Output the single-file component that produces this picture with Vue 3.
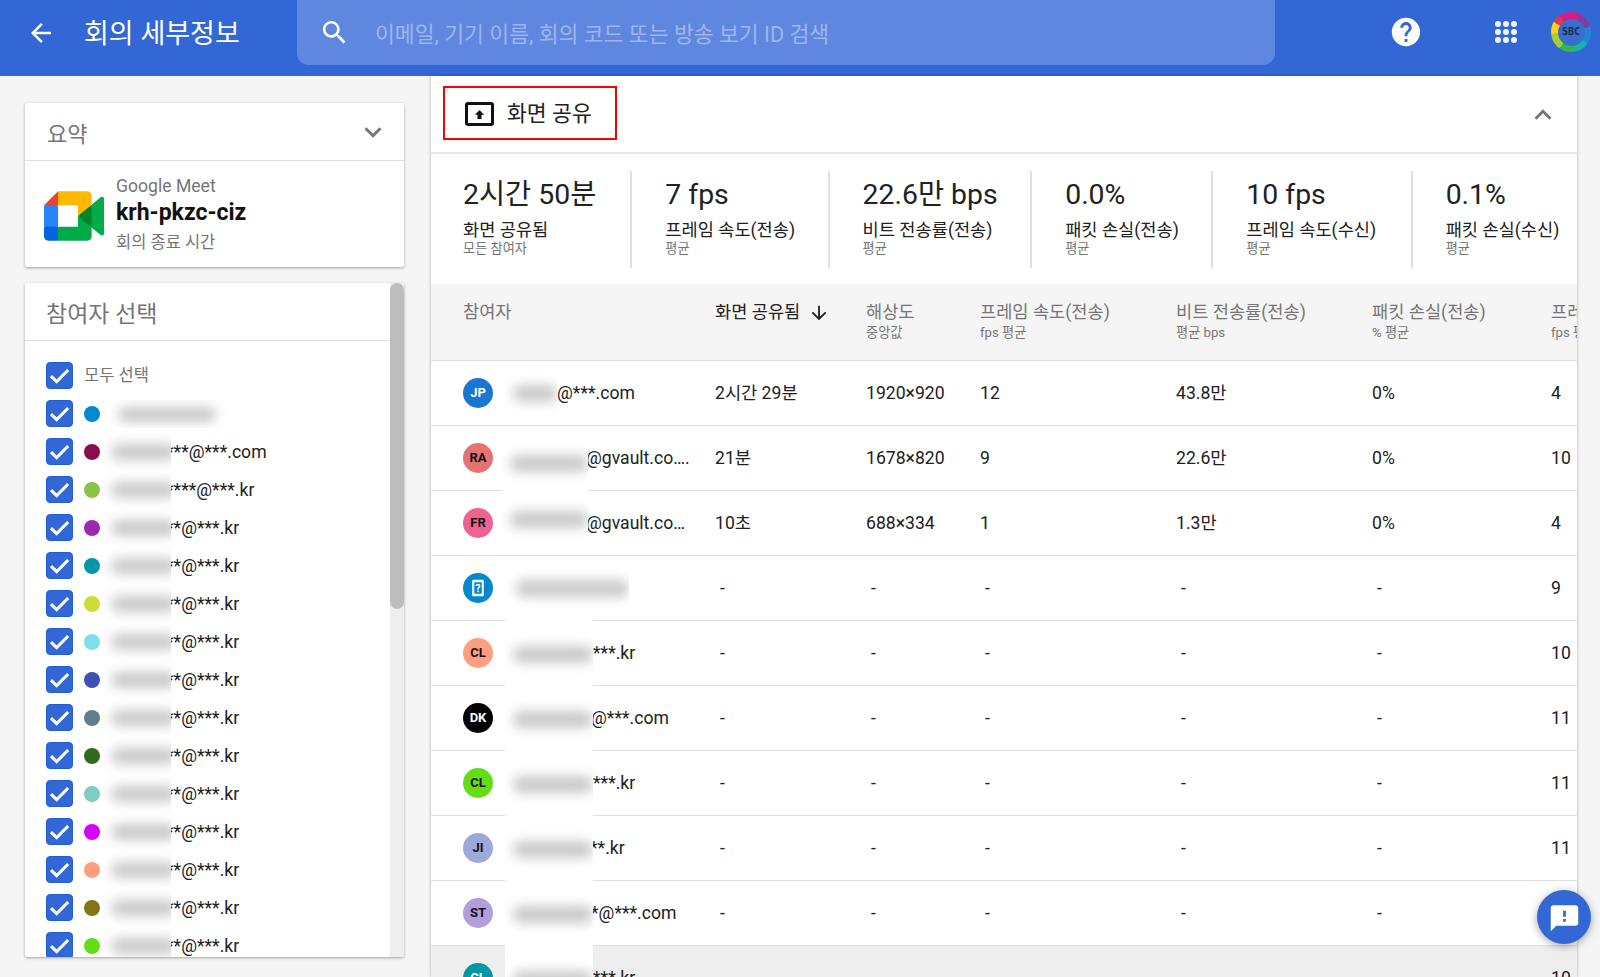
<template>
  <div class="page">
    <header class="topbar">
      <svg class="back-icon" viewBox="0 0 24 24"><path d="M20 11H7.830l5.590-5.590L12 4l-8 8 8 8 1.410-1.410L7.830 13H20v-2z" /></svg>
      <h1 class="page-title">회의 세부정보</h1>
      <div class="search">
        <svg class="search-icon" viewBox="0 0 24 24"><path d="M15.500 14h-.79l-.28-.27C15.410 12.590 16 11.110 16 9.500 16 5.910 13.090 3 9.500 3S3 5.910 3 9.500 5.910 16 9.500 16c1.610 0 3.090-.59 4.230-1.570l.27.28v.79l5 4.990L20.490 19l-4.990-5zm-6 0C7.010 14 5 11.990 5 9.500S7.010 5 9.500 5 14 7.010 14 9.500 11.990 14 9.500 14z" /></svg>
        <span class="search-text">이메일, 기기 이름, 회의 코드 또는 방송 보기 ID 검색</span>
      </div>
      <svg class="help-icon" viewBox="0 0 24 24"><path d="M12 2C6.480 2 2 6.480 2 12s4.480 10 10 10 10-4.480 10-10S17.520 2 12 2zm1 17h-2v-2h2v2zm2.070-7.750l-.9.920C13.450 12.900 13 13.500 13 15h-2v-.5c0-1.100.45-2.100 1.170-2.830l1.240-1.260c.37-.36.59-.86.59-1.410 0-1.100-.9-2-2-2s-2 .9-2 2H8c0-2.210 1.790-4 4-4s4 1.790 4 4c0 .88-.36 1.680-.93 2.250z" /></svg>
      <div class="apps">
        <i v-for="n in 9" :key="n"></i>
      </div>
      <div class="account"><span class="account-inner">SBC</span></div>
    </header>

    <div class="content">
      <aside class="side">
        <section class="card summary">
          <div class="card-head">
            <span class="summary-title">요약</span>
            <svg class="chevron" viewBox="0 0 24 24"><path d="M7.410 8.590 12 13.170l4.590-4.580L18 10l-6 6-6-6z" /></svg>
          </div>
          <div class="meet">
            <svg class="meet-logo" viewBox="0 0 87.500 72">
              <path fill="#00832d" d="M49.500 36l8.530 9.750 11.470 7.330 2-17.020-2-16.640-11.690 6.440z" />
              <path fill="#0066da" d="M0 51.500V66c0 3.315 2.685 6 6 6h14.500l3-10.960-3-9.540-9.950-3z" />
              <path fill="#e94235" d="M20.500 0L0 20.500l10.550 3 9.950-3 2.950-9.410z" />
              <path fill="#2684fc" d="M20.500 20.500H0v31h20.500z" />
              <path fill="#00ac47" d="M82.600 8.680L69.500 19.420v33.660l13.160 10.790c1.970 1.540 4.850.135 4.850-2.370V11c0-2.535-2.945-3.925-4.910-2.320zM49.500 36v15.500h-29V72h43c3.315 0 6-2.685 6-6V53.080z" />
              <path fill="#ffba00" d="M63.500 0h-43v20.500h29V36l20-16.570V6c0-3.315-2.685-6-6-6z" />
            </svg>
            <div class="meet-text">
              <div class="meet-app">Google Meet</div>
              <div class="meet-code">krh-pkzc-ciz</div>
              <div class="meet-state">회의 종료 시간</div>
            </div>
          </div>
        </section>

        <section class="card people">
          <div class="people-main">
            <div class="people-head">참여자 선택</div>
            <div class="people-list">
              <div class="pick-row">
                <span class="check"><svg viewBox="0 0 24 24"><path d="M3.800 12.500l5.500 5.300L20.300 6.700" /></svg></span>
                <span class="pick-all">모두 선택</span>
              </div>
              <div v-for="(p, i) in picks" :key="i" class="pick-row">
                <span class="check"><svg viewBox="0 0 24 24"><path d="M3.800 12.500l5.500 5.300L20.300 6.700" /></svg></span>
                <span class="dot" :style="{ background: p.color }"></span>
                <span v-if="i === 0" class="pick-blur-wide"><b></b></span>
                <template v-else>
                  <span class="pick-blur"><b></b></span>
                  <span class="pick-mail">{{ p.mail }}</span>
                </template>
              </div>
            </div>
          </div>
          <div class="scroll-track"><div class="scroll-thumb"></div></div>
        </section>
      </aside>

      <main class="panel">
        <div class="section-head">
          <div class="section-title">
            <span class="share-icon">
              <svg viewBox="0 0 12 12"><path d="M6 1 11 6.300H8.200V11H3.800V6.300H1z" /></svg>
            </span>
            <span>화면 공유</span>
          </div>
          <svg class="chevron up" viewBox="0 0 24 24"><path d="M7.410 15.410 12 10.830l4.590 4.580L18 14l-6-6-6 6z" /></svg>
        </div>

        <div class="metrics">
          <div v-for="m in metrics" :key="m.label" class="metric">
            <div class="metric-value">{{ m.value }}</div>
            <div class="metric-label">{{ m.label }}</div>
            <div class="metric-sub">{{ m.sub }}</div>
          </div>
        </div>

        <div class="table-head grid">
          <div v-for="c in columns" :key="c.title" class="th" :class="{ active: c.active }">
            <div class="th-title">
              {{ c.title }}
              <svg v-if="c.active" class="sort-icon" viewBox="0 0 24 24"><path d="M20 12l-1.410-1.410L13 16.170V4h-2v12.170l-5.580-5.590L4 12l8 8 8-8z" /></svg>
            </div>
            <div class="th-sub">{{ c.sub }}</div>
          </div>
        </div>

        <div v-for="(r, i) in rows" :key="i" class="row grid" :class="{ hover: r.hover }">
          <div class="name-cell">
            <span class="avatar" :style="{ background: r.color, color: r.ink }">
              <svg v-if="r.device" class="device-icon" viewBox="0 0 24 24"><path d="M6.500 2h11c.8 0 1.500.7 1.500 1.500v17c0 .8-.7 1.500-1.500 1.500h-11c-.8 0-1.500-.7-1.500-1.500v-17C5 2.700 5.700 2 6.500 2zM7.500 5v14h9V5z" /><path d="M11 15h2v2h-2zM12 7c1.700 0 3 1.100 3 2.700 0 1.900-2 2-2 4h-2c0-2.600 2-2.600 2-4 0-.5-.4-.9-1-.9s-1 .4-1 .9H9C9 8.100 10.300 7 12 7z" /></svg>
              <template v-else>{{ r.initials }}</template>
            </span>
            <span class="blur-patch" :class="r.patch" :style="{ width: r.blurW + 'px', marginLeft: r.blurX + 'px' }"><b></b></span>
            <span class="mail" :style="{ marginLeft: r.tuck + 'px' }">{{ r.mail }}</span>
          </div>
          <div v-for="(v, j) in r.values" :key="j" class="cell" :class="{ dash: v === '-' }">{{ v }}</div>
        </div>
      </main>
    </div>

    <button class="feedback">
      <svg viewBox="0 0 24 24"><path d="M20 3H4c-1.100 0-2 .9-2 2v17l4-4h14c1.100 0 2-.9 2-2V5c0-1.100-.9-2-2-2zm-7 8.500h-2V7h2v4.500zm0 3.500h-2v-2h2v2z" /></svg>
    </button>
  </div>
</template>

<script setup>
const colors = ['#0288d1', '#880e4f', '#8bc34a', '#9c27b0', '#0097a7', '#cddc39', '#80deea', '#3f51b5', '#607d8b', '#33691e', '#80cbc4', '#d500f9', '#ff9e80', '#827717', '#64dd17']

const picks = colors.map((color, i) => {
  let mail = '**@***.kr'
  if (i === 1) mail = '***@***.com'
  if (i === 2) mail = '****@***.kr'
  return { color, mail }
})

const metrics = [
  { value: '2시간 50분', label: '화면 공유됨', sub: '모든 참여자' },
  { value: '7 fps', label: '프레임 속도(전송)', sub: '평균' },
  { value: '22.6만 bps', label: '비트 전송률(전송)', sub: '평균' },
  { value: '0.0%', label: '패킷 손실(전송)', sub: '평균' },
  { value: '10 fps', label: '프레임 속도(수신)', sub: '평균' },
  { value: '0.1%', label: '패킷 손실(수신)', sub: '평균' }
]

const columns = [
  { title: '참여자', sub: '' },
  { title: '화면 공유됨', sub: '', active: true },
  { title: '해상도', sub: '중앙값' },
  { title: '프레임 속도(전송)', sub: 'fps 평균' },
  { title: '비트 전송률(전송)', sub: '평균 bps' },
  { title: '패킷 손실(전송)', sub: '% 평균' },
  { title: '프레임 속도(수신)', sub: 'fps 평균' }
]

const empty = ['-', '-', '-', '-', '-']

const rows = [
  { initials: 'JP', color: '#1976d2', ink: '#fff', blurX: 12, blurW: 52, patch: 'short', tuck: 0, mail: '@***.com', values: ['2시간 29분', '1920×920', '12', '43.8만', '0%', '4'] },
  { initials: 'RA', color: '#e57373', ink: '#111', blurX: 9, blurW: 86, patch: 'open-bottom', tuck: -2, mail: '@gvault.co….', values: ['21분', '1678×820', '9', '22.6만', '0%', '10'] },
  { initials: 'FR', color: '#f06292', ink: '#111', blurX: 9, blurW: 86, patch: 'open-top', tuck: -2, mail: '@gvault.co…', values: ['10초', '688×334', '1', '1.3만', '0%', '4'] },
  { device: true, color: '#0288d1', ink: '#fff', blurX: 15, blurW: 121, patch: 'short', tuck: 0, mail: '', values: [...empty, '9'] },
  { initials: 'CL', color: '#ff9e80', ink: '#111', blurX: 12, blurW: 88, patch: 'full', tuck: 0, mail: '***.kr', values: [...empty, '10'] },
  { initials: 'DK', color: '#000', ink: '#fff', blurX: 12, blurW: 88, patch: 'full', tuck: -2, mail: '@***.com', values: [...empty, '11'] },
  { initials: 'CL', color: '#64dd17', ink: '#111', blurX: 12, blurW: 88, patch: 'full', tuck: 0, mail: '***.kr', values: [...empty, '11'] },
  { initials: 'JI', color: '#9fa8da', ink: '#111', blurX: 12, blurW: 88, patch: 'full', tuck: -3, mail: '**.kr', values: [...empty, '11'] },
  { initials: 'ST', color: '#b39ddb', ink: '#111', blurX: 12, blurW: 88, patch: 'full', tuck: -2, mail: '*@***.com', values: [...empty, '11'] },
  { initials: 'CL', color: '#0097a7', ink: '#fff', blurX: 12, blurW: 88, patch: 'full', tuck: 0, mail: '***.kr', values: [...empty, '10'], hover: true }
]
</script>

<style scoped>
.page {
  position: relative;
  width: 1600px;
  height: 977px;
  overflow: hidden;
  background: #f5f5f5;
  color: #212121;
  font-family: Roboto, "Noto Sans CJK KR", sans-serif;
  font-size: 17.600px;
}

.topbar {
  height: 76px;
  background: #3367d6;
  display: flex;
  align-items: flex-start;
  color: #fff;
}

.back-icon {
  width: 30px;
  height: 30px;
  fill: #fff;
  margin: 18px 0 0 26px;
}

.page-title {
  width: 213px;
  margin: 14px 0 0 28px;
  font-size: 27px;
  font-weight: 400;
  line-height: 40px;
}

.search {
  width: 978px;
  height: 65px;
  background: #6087df;
  border-radius: 0 0 12px 12px;
  display: flex;
  align-items: center;
}

.search-icon {
  width: 31px;
  height: 31px;
  fill: #fff;
  margin-left: 22px;
}

.search-text {
  margin-left: 25px;
  font-size: 21.600px;
  color: #9db6ed;
}

.help-icon {
  width: 34px;
  height: 34px;
  fill: #fff;
  margin: 15px 0 0 114px;
}

.apps {
  width: 24px;
  margin: 21px 0 0 72px;
  display: grid;
  grid-template-columns: repeat(3, 6px);
  grid-auto-rows: 6px;
  gap: 2.100px;
}

.apps i {
  background: #f0f4fc;
  border-radius: 50%;
}

.account {
  width: 40px;
  height: 40px;
  margin: 12px 0 0 32px;
  border-radius: 50%;
  background: conic-gradient(#d81b8a 0deg 30deg, #7b3fa0 30deg 75deg, #1e88d8 75deg 125deg, #12b5b0 125deg 165deg, #2fb84e 165deg 215deg, #a5cf30 215deg 265deg, #fdd017 265deg 300deg, #e8344e 300deg 325deg, #d81b8a 325deg 360deg);
  display: flex;
  align-items: center;
  justify-content: center;
}

.account-inner {
  width: 27px;
  height: 27px;
  border-radius: 50%;
  background: #3a6dcc;
  color: #1a2a55;
  font-family: "DejaVu Sans Mono", monospace;
  font-size: 10px;
  font-weight: 700;
  text-align: center;
  line-height: 26px;
}

.content {
  display: flex;
  height: 901px;
}

.side {
  width: 431px;
  flex: none;
  padding: 27px 27px 20px 25px;
  box-sizing: border-box;
  display: flex;
  flex-direction: column;
  gap: 16px;
}

.card {
  background: #fff;
  border-radius: 2px;
  box-shadow: 0 1px 3px rgba(0, 0, 0, 0.35);
}

.summary {
  height: 164px;
}

.card-head {
  height: 57px;
  padding: 0 14px 0 22px;
  display: flex;
  align-items: center;
  justify-content: space-between;
  border-bottom: 1px solid #e0e0e0;
}

.summary-title {
  font-size: 22px;
  color: #757575;
}

.chevron {
  width: 34px;
  height: 34px;
  fill: #757575;
}

.meet {
  display: flex;
  align-items: center;
  padding: 13px 0 0 19px;
}

.meet-logo {
  width: 60px;
  height: 50px;
}

.meet-text {
  margin-left: 12px;
}

.meet-app {
  font-size: 17.600px;
  line-height: 24px;
  color: #757575;
}

.meet-code {
  font-size: 23px;
  font-weight: 700;
  line-height: 30px;
  color: #111;
}

.meet-state {
  font-size: 16.500px;
  line-height: 29px;
  color: #757575;
}

.people {
  flex: 1;
  min-height: 0;
  display: flex;
  overflow: hidden;
}

.people-main {
  flex: 1;
  min-width: 0;
  overflow: hidden;
}

.people-head {
  height: 58px;
  box-sizing: border-box;
  padding: 7px 0 0 21px;
  font-size: 23px;
  line-height: 50px;
  color: #757575;
  border-bottom: 1px solid #e0e0e0;
}

.people-list {
  padding: 21px 0 0 21px;
  display: flex;
  flex-direction: column;
  gap: 11px;
}

.pick-row {
  height: 27px;
  display: flex;
  align-items: center;
  flex: none;
}

.check {
  width: 27px;
  height: 27px;
  flex: none;
  box-sizing: border-box;
  background: #3367d6;
  border: 1px solid #1e5fd8;
  border-radius: 4px;
}

.check svg {
  display: block;
  width: 25px;
  height: 25px;
  fill: none;
  stroke: #fff;
  stroke-width: 3;
}

.pick-all {
  margin-left: 11px;
  font-size: 16.500px;
  line-height: 24px;
  color: #757575;
}

.dot {
  width: 16px;
  height: 16px;
  flex: none;
  margin-left: 11px;
  border-radius: 50%;
}

.pick-blur,
.pick-blur-wide {
  position: relative;
  flex: none;
  background: #fff;
  overflow: hidden;
}

.pick-blur {
  width: 68px;
  height: 38px;
  margin-left: 3px;
  z-index: 1;
}

.pick-blur-wide {
  width: 130px;
  height: 28px;
  margin-left: 6px;
}

.pick-blur b,
.pick-blur-wide b,
.blur-patch b {
  position: absolute;
  background: #c9c9c9;
  border-radius: 8px;
  filter: blur(6px);
}

.pick-blur b {
  left: 8px;
  right: -6px;
  top: 11px;
  height: 16px;
}

.pick-blur-wide b {
  left: 12px;
  right: 20px;
  top: 7px;
  height: 15px;
}

.pick-mail {
  margin-left: -5px;
  line-height: 24px;
  white-space: nowrap;
}

.scroll-track {
  width: 14px;
  flex: none;
  background: #eeeeee;
}

.scroll-thumb {
  height: 326px;
  background: #bdbdbd;
  border-radius: 7px;
}

.panel {
  position: relative;
  width: 1146px;
  flex: none;
  background: #fff;
  overflow: hidden;
  box-shadow: 0 0 3px rgba(0, 0, 0, 0.3);
}

.section-head {
  height: 78px;
  box-sizing: border-box;
  padding: 10px 17px 0 12px;
  display: flex;
  align-items: flex-start;
  justify-content: space-between;
  border-bottom: 2px solid #e8e8e8;
}

.section-title {
  width: 174px;
  height: 54px;
  box-sizing: border-box;
  border: 2px solid #f00;
  padding: 2px 0 0 20px;
  display: flex;
  align-items: center;
  gap: 13px;
  font-size: 21.600px;
  line-height: 30px;
  color: #212121;
}

.share-icon {
  width: 29px;
  height: 24px;
  box-sizing: border-box;
  border: 3px solid #111;
  border-radius: 3px;
  display: flex;
  align-items: center;
  justify-content: center;
}

.share-icon svg {
  width: 11px;
  height: 11px;
  fill: #111;
}

.chevron.up {
  margin-top: 12px;
}

.metrics {
  height: 130px;
  box-sizing: border-box;
  padding: 17px 0 0 32px;
  display: flex;
  white-space: nowrap;
}

.metric {
  height: 97px;
  flex: none;
  padding-right: 32.500px;
  margin-right: 33px;
  border-right: 2px solid #e0e0e0;
}

.metric:first-child {
  padding-right: 34px;
}

.metric:nth-child(5) {
  padding-right: 34.500px;
}

.metric:last-child {
  border-right: 0;
}

.metric-value {
  font-size: 28.400px;
  line-height: 47px;
  color: #212121;
}

.metric-label {
  line-height: 24px;
  color: #212121;
}

.metric-sub {
  font-size: 13.200px;
  line-height: 13px;
  color: #757575;
}

.grid {
  display: grid;
  grid-template-columns: 252px 151px 114px 196px 196px 179px 120px;
  padding-left: 32px;
  white-space: nowrap;
}

.table-head {
  height: 77px;
  box-sizing: border-box;
  padding-top: 16px;
  background: #f5f5f5;
  border-bottom: 1px solid #e0e0e0;
}

.th {
  color: #757575;
}

.th.active {
  color: #212121;
}

.th-title {
  display: flex;
  align-items: center;
  gap: 8px;
  line-height: 25px;
}

.sort-icon {
  width: 22px;
  height: 22px;
  fill: #212121;
}

.th-sub {
  font-size: 13.200px;
  line-height: 16px;
}

.row {
  height: 65px;
  box-sizing: border-box;
  align-items: center;
  line-height: 24px;
  border-bottom: 1px solid #e0e0e0;
}

.row.hover {
  background: #eeeeee;
}

.name-cell {
  display: flex;
  align-items: center;
  height: 100%;
}

.avatar {
  width: 30px;
  height: 30px;
  flex: none;
  border-radius: 50%;
  display: flex;
  align-items: center;
  justify-content: center;
  font-size: 13px;
  font-weight: 700;
}

.device-icon {
  width: 20px;
  height: 20px;
  fill: #fff;
}

.blur-patch {
  position: relative;
  z-index: 1;
  flex: none;
  background: #fff;
  overflow: hidden;
}

.blur-patch b {
  left: 8px;
  right: 0;
  top: 50%;
  height: 17px;
  margin-top: -8px;
}

.blur-patch.short {
  height: 38px;
}

.blur-patch.full {
  align-self: stretch;
  margin-top: -1px;
  margin-bottom: -2px;
}

.blur-patch.open-bottom {
  align-self: stretch;
  margin-top: 8px;
  margin-bottom: -2px;
}

.blur-patch.open-top {
  align-self: stretch;
  margin-top: -1px;
  margin-bottom: 8px;
}

.cell.dash {
  padding-left: 5px;
}

.feedback {
  position: absolute;
  left: 1537px;
  top: 890px;
  width: 54px;
  height: 54px;
  padding: 0;
  border: 0;
  border-radius: 50%;
  background: #3367d6;
  box-shadow: 0 2px 8px rgba(0, 0, 0, 0.35);
  display: flex;
  align-items: center;
  justify-content: center;
}

.feedback svg {
  width: 33px;
  height: 33px;
  fill: #fff;
}
</style>
